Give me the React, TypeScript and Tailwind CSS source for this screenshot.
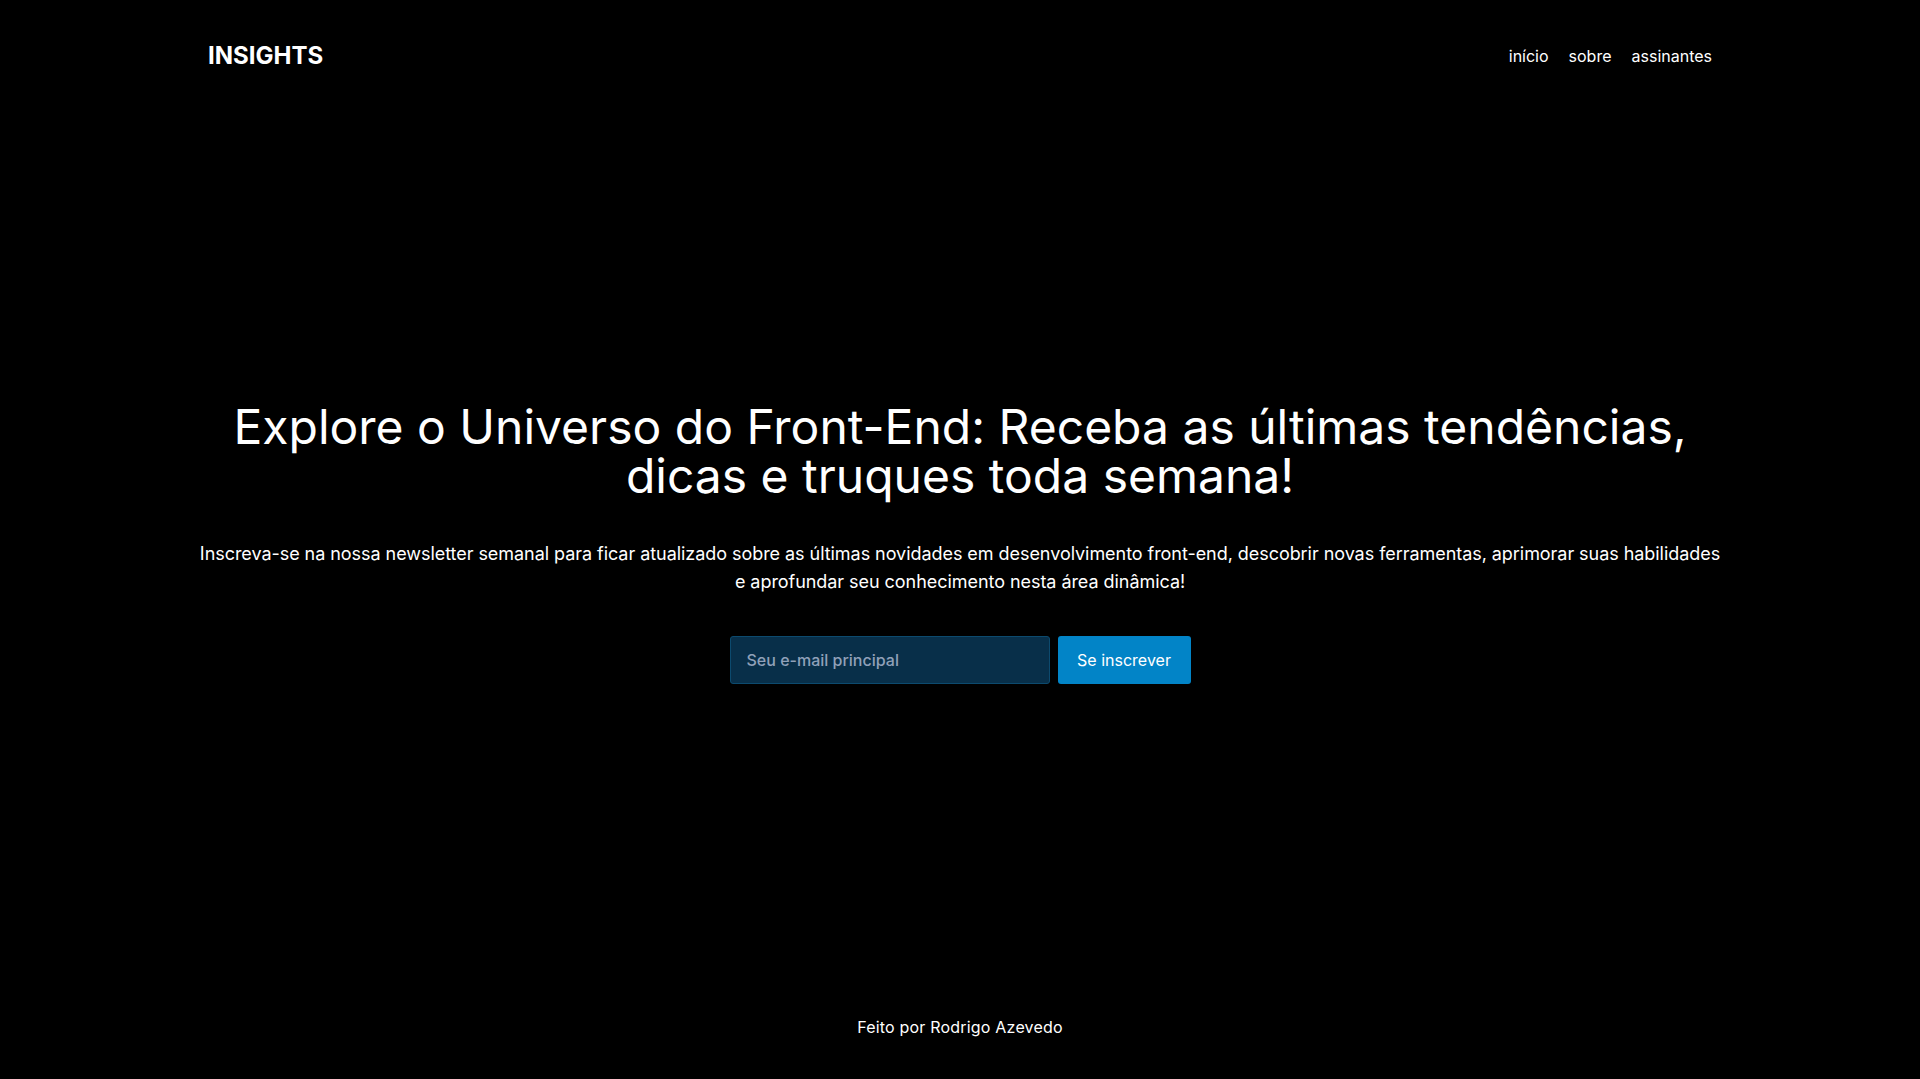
import React, { useState } from 'react'

const navLinks = ['início', 'sobre', 'assinantes']

export default function App() {
    const [email, setEmail] = useState('')

    return (
        <div className="min-h-screen h-[1079px] bg-black text-white flex flex-col font-['Inter',sans-serif] antialiased">
            <header className="w-full max-w-[1536px] mx-auto px-4 py-10">
                <div className="h-8 flex items-center justify-between">
                    <h1 className="text-2xl font-bold">INSIGHTS</h1>
                    <nav className="flex items-center gap-5 text-base">
                        {navLinks.map((link) => (
                            <a key={link} href="#" className="hover:text-sky-400">
                                {link}
                            </a>
                        ))}
                    </nav>
                </div>
            </header>

            <main className="flex-1 flex flex-col items-center justify-center text-center px-4 pb-px">
                <h2 className="max-w-[1504px] text-5xl leading-[49px] font-normal">
                    Explore o Universo do Front-End: Receba as últimas tendências, dicas e truques toda semana!
                </h2>
                <p className="max-w-[1530px] mt-10 text-lg leading-7 tracking-[-0.05px]">
                    Inscreva-se na nossa newsletter semanal para ficar atualizado sobre as últimas novidades em desenvolvimento front-end, descobrir novas ferramentas, aprimorar suas habilidades e aprofundar seu conhecimento nesta área dinâmica!
                </p>

                <form className="mt-10 flex items-center gap-2" onSubmit={(e) => e.preventDefault()}>
                    <input
                        type="email"
                        value={email}
                        onChange={(e) => setEmail(e.target.value)}
                        placeholder="Seu e-mail principal"
                        className="w-[320px] h-12 px-4 rounded-[3px] bg-[#082f49] border border-[#0c4a6e] text-base font-medium text-white placeholder:text-slate-400 outline-none"
                    />
                    <button type="submit" className="w-[133px] h-12 rounded-[3px] bg-[#0284c7] text-base text-white">
                        Se inscrever
                    </button>
                </form>
            </main>

            <footer className="py-10 text-center text-base leading-6 tracking-[0.2px]">
                Feito por Rodrigo Azevedo
            </footer>
        </div>
    )
}
